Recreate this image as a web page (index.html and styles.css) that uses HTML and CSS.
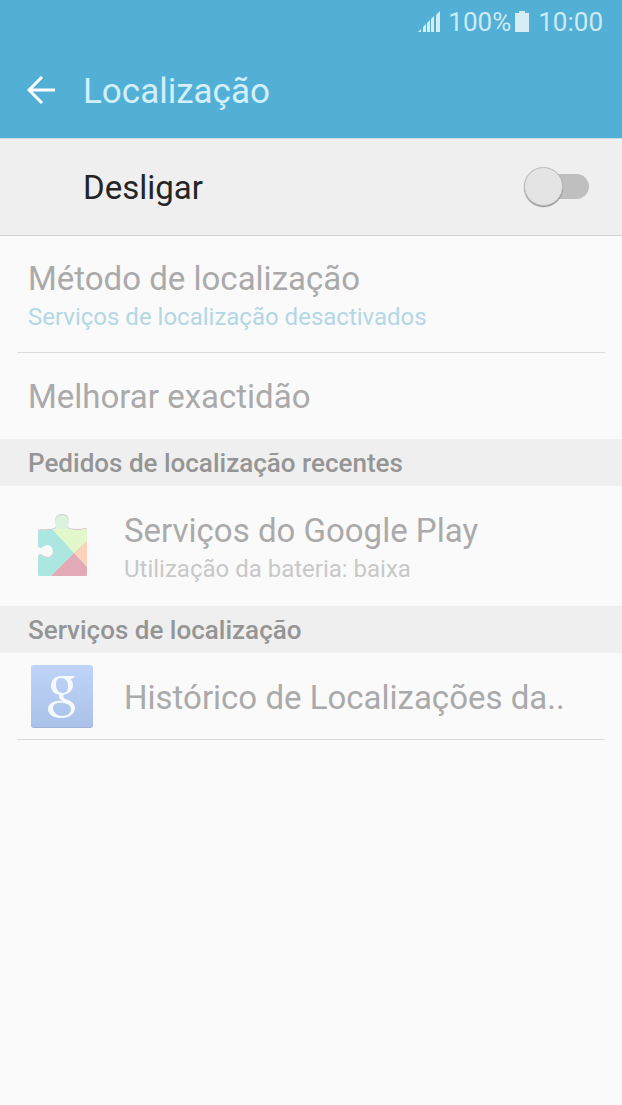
FILE: index.html
```html
<!DOCTYPE html>
<html lang="pt">
<head>
<meta charset="utf-8">
<meta name="viewport" content="width=device-width, initial-scale=1">
<title>Localização</title>
<link rel="stylesheet" href="styles.css">
</head>
<body>
<header class="top">
  <div class="status">
    <svg class="signal" width="22" height="22" viewBox="0 0 22 22" aria-hidden="true">
      <path d="M0 21l3-3v3zM5 21v-5l3-3v8zM9 21v-9l3-3v12zM13 21V8l3-3v16zM18 21V4l4-4v21z"/>
    </svg>
    <span>100%</span>
    <svg class="battery" width="14" height="21" viewBox="0 0 14 21" aria-hidden="true">
      <path d="M4 0h6v2h4v19H0V2h4z"/>
    </svg>
    <span>10:00</span>
  </div>
  <div class="bar">
    <button class="back" type="button" aria-label="Voltar">
      <svg width="28" height="28" viewBox="0 0 28 28" aria-hidden="true">
        <path d="M28 14H2M15 1L2 14l13 13"/>
      </svg>
    </button>
    <h1 class="title">Localização</h1>
  </div>
</header>
<main>
  <div class="master">
    <label class="master-label" for="location">Desligar</label>
    <input class="switch" id="location" type="checkbox" role="switch">
  </div>
  <div class="item method">
    <div class="name">Método de localização</div>
    <div class="note accent">Serviços de localização desactivados</div>
  </div>
  <div class="item improve">
    <div class="name">Melhorar exactidão</div>
  </div>
  <h2 class="section">Pedidos de localização recentes</h2>
  <div class="item app">
    <svg class="app-icon" width="68" height="68" viewBox="0 0 68 68" aria-hidden="true">
      <defs>
        <clipPath id="piece">
          <path d="M13 19Q10 19 10 22V34Q10 37 13 37Q16 34 20 34Q25 35 25 41Q25 46 20 47Q16 47 13 44Q10 44 10 48V63Q10 65 12 65H58Q59 65 59 63V20Q59 18 57 18Q49 20 41 18Q39 16 41 11Q41 4 34 4Q27 4 27 11Q29 16 27 18Q20 20 13 19Z"/>
        </clipPath>
      </defs>
      <path class="piece-edge" d="M13 18Q10 18 10 21V33Q10 36 13 36Q16 33 20 33Q25 34 25 40Q25 45 20 46Q16 46 13 43Q10 43 10 47V63Q10 65 12 65H58Q59 65 59 63V19Q59 17 57 17Q49 19 41 17Q39 15 41 10Q41 3 34 3Q27 3 27 10Q29 15 27 17Q20 19 13 18Z"/>
      <g clip-path="url(#piece)">
        <path fill="#d8f2dd" d="M0 0h68v68H0z"/>
        <path fill="#e2f8cb" d="M23 18h40v8L46 42z"/>
        <path fill="#ace6e1" d="M0 16h22l24 26L20 68H0z"/>
        <path fill="#fcd2b9" d="M62 27v31L46 42z"/>
        <path fill="#e2a9b6" d="M46 42l24 26H20z"/>
      </g>
    </svg>
    <div class="text">
      <div class="name">Serviços do Google Play</div>
      <div class="note">Utilização da bateria: baixa</div>
    </div>
  </div>
  <h2 class="section">Serviços de localização</h2>
  <div class="item service">
    <svg class="app-icon" width="68" height="68" viewBox="0 0 68 68" aria-hidden="true">
      <defs>
        <linearGradient id="tile" x1="0" y1="0" x2="0" y2="1">
          <stop offset="0" stop-color="#bfd4f8"/>
          <stop offset="1" stop-color="#aac1e9"/>
        </linearGradient>
      </defs>
      <rect x="3" y="4" width="62" height="62" rx="3" fill="#9fb3d8"/>
      <rect x="3" y="3" width="62" height="62" rx="3" fill="url(#tile)"/>
      <g fill="#f6f9fd" fill-rule="evenodd">
        <path d="M34 14C27 14 23 18 23 24C23 29 27 33 33 33C40 33 45 29 45 23C45 18 41 14 34 14ZM33 16C38 16 40 20 40 24C40 29 38 31 35 31C30 31 28 27 28 22C28 18 30 16 33 16Z"/>
        <path d="M34 14H47L44 17H38Z"/>
        <path d="M32 32L36 32C34 35 36 37 40 38C45 40 47 43 47 46C47 52 41 56 33 56C25 56 20 52 20 47C20 41 27 38 35 39C31 37 30 35 32 32ZM36 41C29 40 25 42 25 46C25 50 29 54 34 54C40 54 43 51 43 47C43 44 40 42 36 41Z"/>
      </g>
    </svg>
    <div class="name">Histórico de Localizações da..</div>
  </div>
</main>
</body>
</html>
```
FILE: styles.css
```css
* {
  box-sizing: border-box;
}

body {
  margin: 0;
  min-height: 100vh;
  background: #fafafa;
  color: #aaa;
  font-family: Roboto, "Liberation Sans", sans-serif;
}

h1,
h2 {
  margin: 0;
}

.top {
  background: #52afd5;
  color: #cdeaf5;
}

.status {
  display: flex;
  justify-content: flex-end;
  align-items: center;
  height: 44px;
  padding: 0 19px;
  font-size: 26px;
  line-height: 32px;
}

.status svg {
  fill: #d6edf6;
}

.signal {
  margin-right: 8px;
}

.battery {
  margin: 0 9px 2px 4px;
}

.bar {
  display: flex;
  align-items: center;
  height: 94px;
  padding: 2px 27px 0;
}

.back {
  display: flex;
  margin: 0 28px 4px 0;
  padding: 0;
  border: 0;
  background: none;
}

.back path {
  fill: none;
  stroke: #fff;
  stroke-width: 3;
}

.title {
  color: #d3effa;
  font-size: 35px;
  font-weight: 400;
  line-height: 44px;
}

.master {
  display: flex;
  justify-content: space-between;
  align-items: flex-start;
  height: 98px;
  padding: 28px 33px 0 83px;
  border-top: 1px solid #d3dde1;
  border-bottom: 1px solid #d0d0d0;
  background: #efefef;
}

.master-label {
  padding-top: 1px;
  color: #252525;
  font-size: 33px;
  line-height: 40px;
}

.switch {
  position: relative;
  width: 65px;
  height: 40px;
  margin: 0;
  appearance: none;
}

.switch::before {
  content: "";
  position: absolute;
  inset: 7px 0 8px 8px;
  border-radius: 13px;
  background: #bfbfbf;
}

.switch::after {
  content: "";
  position: absolute;
  top: 0;
  left: 0;
  box-sizing: border-box;
  width: 39px;
  height: 39px;
  border: 1px solid #bcbcbc;
  border-radius: 50%;
  background: #e4e4e4;
  box-shadow: 0 1px 1px #888;
}

.switch:checked::after {
  left: 26px;
}

.name {
  font-size: 33px;
  line-height: 40px;
}

.note {
  color: #c8c8c8;
  font-size: 24px;
  line-height: 36px;
}

.accent {
  color: #b3d7e5;
}

.item {
  padding: 0 28px;
}

.method {
  margin: 0 17px;
  padding: 23px 11px 17px;
  border-bottom: 1px solid #dcdcdc;
}

.improve {
  padding-top: 24px;
  padding-bottom: 22px;
}

.section {
  padding: 6px 28px 5px;
  background: #efefef;
  color: #959595;
  font-size: 26px;
  font-weight: 500;
  line-height: 36px;
}

.app,
.service {
  display: flex;
  gap: 28px;
}

.app {
  align-items: flex-start;
  padding-top: 25px;
  padding-bottom: 19px;
}

.app-icon {
  flex: none;
}

.piece-edge {
  fill: #d5c8cc;
}

.service {
  align-items: center;
  height: 87px;
  margin: 0 17px;
  padding: 0 11px;
  border-bottom: 1px solid #dcdcdc;
}

.service .name {
  padding-top: 4px;
}
```
